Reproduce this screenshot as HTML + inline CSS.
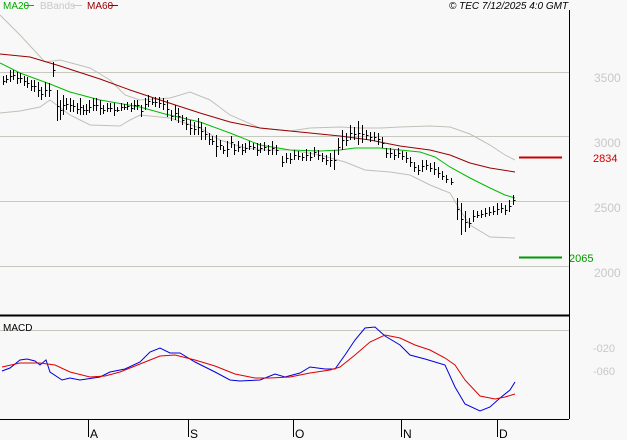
<!DOCTYPE html>
<html><head><meta charset="utf-8"><style>
html,body{margin:0;padding:0;background:#f8f8f8;width:627px;height:440px;overflow:hidden}
svg{display:block}
text{font-family:"Liberation Sans",sans-serif}
</style></head><body>
<svg id="s" width="627" height="440" xmlns="http://www.w3.org/2000/svg">
<rect width="627" height="440" fill="#f8f8f8"/>
<g stroke="#c8c8c0" stroke-width="1">
<line x1="0" y1="72.5" x2="569" y2="72.5"/><line x1="0" y1="136.5" x2="569" y2="136.5"/>
<line x1="0" y1="201.5" x2="569" y2="201.5"/><line x1="0" y1="266.5" x2="569" y2="266.5"/>
<line x1="0" y1="330.5" x2="569" y2="330.5"/>
</g>
<g font-size="12" fill="#c8c8c8">
<text x="594" y="82">3500</text><text x="594" y="147">3000</text><text x="594" y="212">2500</text><text x="594" y="277">2000</text>
<text x="593" y="352" font-size="11">-020</text><text x="593" y="375" font-size="11">-060</text>
</g>
<line x1="569.5" y1="10" x2="569.5" y2="419" stroke="#000"/>
<line x1="0" y1="315.5" x2="569" y2="315.5" stroke="#000" stroke-width="2"/>
<line x1="0" y1="419.5" x2="569" y2="419.5" stroke="#000"/>
<g stroke="#000"><line x1="88.5" y1="419" x2="88.5" y2="437"/><line x1="188.5" y1="419" x2="188.5" y2="437"/><line x1="293.5" y1="419" x2="293.5" y2="437"/><line x1="401.5" y1="419" x2="401.5" y2="437"/><line x1="497.5" y1="419" x2="497.5" y2="437"/></g>
<g font-size="12" fill="#000"><text x="90" y="438">A</text><text x="190" y="438">S</text><text x="295" y="438">O</text><text x="403" y="438">N</text><text x="499" y="438">D</text></g>
<text x="3" y="9" font-size="10" fill="#00aa00">MA20</text><line x1="25" y1="5.5" x2="34" y2="5.5" stroke="#00bb00"/>
<text x="40" y="9" font-size="10" fill="#c8c8c8">BBands</text><line x1="73" y1="5.5" x2="82" y2="5.5" stroke="#c8c8c8"/>
<text x="87" y="9" font-size="10" fill="#990000">MA60</text><line x1="109" y1="5.5" x2="118" y2="5.5" stroke="#990000"/>
<text x="449" y="9" font-size="10" font-style="italic" fill="#000">© TEC 7/12/2025 4:0 GMT</text>
<text x="3" y="331" font-size="10" fill="#000">MACD</text>
<line x1="519" y1="157.5" x2="562" y2="157.5" stroke="#cc0000" stroke-width="2"/>
<text x="593" y="162" font-size="11" fill="#cc0000">2834</text>
<line x1="519" y1="257.5" x2="562" y2="257.5" stroke="#009900" stroke-width="2"/>
<text x="569" y="262" font-size="11" fill="#009900">2065</text>
<g fill="none">
<polyline stroke="#c0c0b8" points="0,15 20,35 45,62 60,60 90,68 110,80 125,95 140,100 170,98 190,92 210,100 230,115 260,128 290,131 310,128 340,127 360,128 380,128 400,127 430,126 450,127 470,134 490,145 505,155 515,160"/>
<polyline stroke="#c0c0b8" points="0,113 20,111 40,107 50,100 70,115 90,125 120,126 130,120 140,115 170,118 200,128 220,140 245,148 265,150 290,150 320,155 345,162 365,170 390,172 410,175 430,185 450,193 460,210 470,225 490,237 515,238"/>
<polyline stroke="#990000" points="0,54 30,57 60,66 100,79 130,90 160,100 200,113 230,122 260,128 300,132 340,136 370,140 400,146 430,150 450,155 470,163 490,168 515,172"/>
<polyline stroke="#00bb00" points="0,63 20,73 50,84 70,92 100,100 140,107 165,114 200,122 230,133 260,145 290,150 320,151 340,150 355,148 380,148 400,150 420,152 435,157 450,167 470,178 490,188 505,195 515,198"/>
<polyline stroke="#0000dd" points="2,371 10,368 20,360 27,359 35,361 40,365 46,360 50,372 62,380 70,378 80,380 100,377 110,372 125,369 140,362 150,352 160,348 170,353 180,353 195,362 215,372 230,380 240,381 260,380 275,374 285,377 300,373 310,367 325,369 335,369 345,355 355,340 365,328 375,327 385,336 400,345 410,355 425,359 435,362 445,365 455,387 465,404 480,411 490,407 500,398 510,390 515,382"/>
<polyline stroke="#dd0000" points="2,367 20,363 40,363 55,365 70,372 90,377 105,376 120,372 140,364 160,356 175,355 195,360 215,366 235,374 255,378 270,378 290,377 310,373 330,370 340,367 355,355 370,342 385,335 400,338 415,345 430,350 445,358 455,365 465,380 480,396 495,399 505,397 515,394"/>
</g>
<g id="bars" stroke="#000" stroke-width="1"></g>
</svg>
<script>
var b=[[3,76,85],[6,75,83],[10,70,82],[13,70,80],[17,72,84],[20,73,83],[24,76,86],[27,77,88],[31,80,91],[34,80,92],[38,82,97],[41,87,100],[45,82,97],[49,83,97],[53,62,77],[57,90,121],[60,100,120],[63,95,115],[66,98,110],[70,98,112],[73,100,112],[77,103,114],[80,98,115],[83,105,115],[86,104,115],[89,100,113],[93,98,111],[96,98,111],[100,100,115],[103,105,114],[107,103,112],[110,103,112],[114,103,116],[117,107,112],[121,103,111],[124,104,110],[127,102,110],[131,103,112],[134,100,110],[137,100,110],[141,105,117],[145,98,110],[148,95,107],[152,98,105],[155,97,107],[159,97,108],[163,98,110],[167,100,117],[171,110,121],[175,105,120],[178,108,123],[182,115,125],[186,117,130],[190,120,135],[194,122,135],[198,118,135],[201,122,140],[205,127,140],[209,133,145],[212,136,145],[216,135,157],[220,140,150],[223,146,154],[227,141,157],[231,136,148],[234,144,155],[238,141,152],[242,144,155],[245,143,153],[249,141,150],[253,143,150],[257,143,156],[260,143,153],[264,142,151],[268,145,155],[272,141,155],[276,145,155],[282,156,167],[286,153,163],[290,153,164],[294,150,160],[298,151,160],[302,153,161],[306,149,161],[310,152,161],[314,147,157],[318,150,160],[322,153,162],[326,155,165],[330,153,167],[334,150,170],[338,138,155],[342,130,150],[346,133,146],[350,125,140],[354,127,140],[358,121,145],[362,125,143],[366,130,140],[370,132,142],[374,132,141],[378,133,145],[382,137,148],[386,148,158],[390,148,158],[394,150,160],[398,148,158],[402,151,160],[406,152,163],[410,157,167],[414,162,172],[418,165,175],[422,160,172],[426,160,170],[430,163,172],[434,162,175],[438,167,178],[442,171,180],[446,175,183],[451,178,185],[457,198,220],[461,203,235],[465,211,232],[469,218,228],[473,210,222],[477,211,218],[481,210,218],[485,208,217],[489,207,216],[493,206,215],[497,203,215],[501,203,213],[505,205,215],[509,200,212],[513,195,205]];
var g=document.getElementById('bars'),h='';
b.forEach(function(a){var x=a[0]+.5,m=Math.round((a[1]+a[2])/2)+.5;
h+='<line x1="'+x+'" y1="'+a[1]+'" x2="'+x+'" y2="'+a[2]+'"/><line x1="'+x+'" y1="'+m+'" x2="'+(x+2)+'" y2="'+m+'"/>';});
g.innerHTML=h;
</script>
</body></html>
